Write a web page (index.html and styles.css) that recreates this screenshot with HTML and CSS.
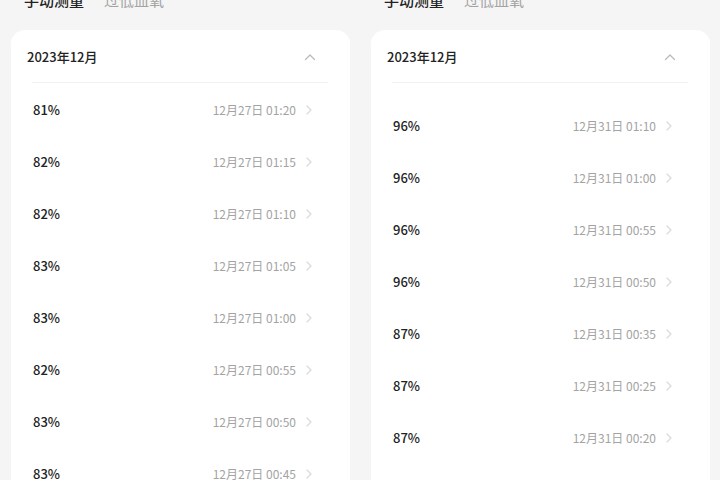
FILE: index.html
```html
<!DOCTYPE html>
<html lang="zh-CN">
  <head>
    <meta charset="UTF-8" />
    <meta name="viewport" content="width=device-width, initial-scale=1.0" />
    <title>血氧记录</title>
    <link rel="stylesheet" href="styles.css">
  </head>
  <body>
    <div class="screens">
      <div class="screen">
        <div class="tabs">
          <span class="tab active">手动测量</span>
          <span class="tab">过低血氧</span>
        </div>
        <div class="card">
          <div class="card-header">
            <span class="month">2023年12月</span>
            <svg class="fold" width="12" height="8" viewBox="0 0 12 8">
              <polyline points="1.5,6.5 6,2 10.5,6.5" />
            </svg>
          </div>
          <div class="list">
            <div class="row"><span class="value">81%</span><span class="time">12月27日 01:20</span><svg class="arrow" width="6" height="10" viewBox="0 0 6 10"><polyline points="1,1 5,5 1,9" /></svg></div>
            <div class="row"><span class="value">82%</span><span class="time">12月27日 01:15</span><svg class="arrow" width="6" height="10" viewBox="0 0 6 10"><polyline points="1,1 5,5 1,9" /></svg></div>
            <div class="row"><span class="value">82%</span><span class="time">12月27日 01:10</span><svg class="arrow" width="6" height="10" viewBox="0 0 6 10"><polyline points="1,1 5,5 1,9" /></svg></div>
            <div class="row"><span class="value">83%</span><span class="time">12月27日 01:05</span><svg class="arrow" width="6" height="10" viewBox="0 0 6 10"><polyline points="1,1 5,5 1,9" /></svg></div>
            <div class="row"><span class="value">83%</span><span class="time">12月27日 01:00</span><svg class="arrow" width="6" height="10" viewBox="0 0 6 10"><polyline points="1,1 5,5 1,9" /></svg></div>
            <div class="row"><span class="value">82%</span><span class="time">12月27日 00:55</span><svg class="arrow" width="6" height="10" viewBox="0 0 6 10"><polyline points="1,1 5,5 1,9" /></svg></div>
            <div class="row"><span class="value">83%</span><span class="time">12月27日 00:50</span><svg class="arrow" width="6" height="10" viewBox="0 0 6 10"><polyline points="1,1 5,5 1,9" /></svg></div>
            <div class="row"><span class="value">83%</span><span class="time">12月27日 00:45</span><svg class="arrow" width="6" height="10" viewBox="0 0 6 10"><polyline points="1,1 5,5 1,9" /></svg></div>
          </div>
        </div>
      </div>

      <div class="screen">
        <div class="tabs">
          <span class="tab active">手动测量</span>
          <span class="tab">过低血氧</span>
        </div>
        <div class="card">
          <div class="card-header">
            <span class="month">2023年12月</span>
            <svg class="fold" width="12" height="8" viewBox="0 0 12 8">
              <polyline points="1.5,6.5 6,2 10.5,6.5" />
            </svg>
          </div>
          <div class="list list-spaced">
            <div class="row"><span class="value">96%</span><span class="time">12月31日 01:10</span><svg class="arrow" width="6" height="10" viewBox="0 0 6 10"><polyline points="1,1 5,5 1,9" /></svg></div>
            <div class="row"><span class="value">96%</span><span class="time">12月31日 01:00</span><svg class="arrow" width="6" height="10" viewBox="0 0 6 10"><polyline points="1,1 5,5 1,9" /></svg></div>
            <div class="row"><span class="value">96%</span><span class="time">12月31日 00:55</span><svg class="arrow" width="6" height="10" viewBox="0 0 6 10"><polyline points="1,1 5,5 1,9" /></svg></div>
            <div class="row"><span class="value">96%</span><span class="time">12月31日 00:50</span><svg class="arrow" width="6" height="10" viewBox="0 0 6 10"><polyline points="1,1 5,5 1,9" /></svg></div>
            <div class="row"><span class="value">87%</span><span class="time">12月31日 00:35</span><svg class="arrow" width="6" height="10" viewBox="0 0 6 10"><polyline points="1,1 5,5 1,9" /></svg></div>
            <div class="row"><span class="value">87%</span><span class="time">12月31日 00:25</span><svg class="arrow" width="6" height="10" viewBox="0 0 6 10"><polyline points="1,1 5,5 1,9" /></svg></div>
            <div class="row"><span class="value">87%</span><span class="time">12月31日 00:20</span><svg class="arrow" width="6" height="10" viewBox="0 0 6 10"><polyline points="1,1 5,5 1,9" /></svg></div>
            <div class="row"><span class="value">87%</span><span class="time">12月31日 00:15</span><svg class="arrow" width="6" height="10" viewBox="0 0 6 10"><polyline points="1,1 5,5 1,9" /></svg></div>
          </div>
        </div>
      </div>
    </div>
  </body>
</html>
```

FILE: styles.css
```css
html,
body {
  height: 100%;
  overflow: hidden;
}
body {
  font-family: "Noto Sans CJK SC", "Noto Sans", sans-serif;
  background-color: #f5f5f5;
  color: #222222;
  margin: 0;
  padding: 0;
}
.screens {
  display: grid;
  grid-template-columns: 360px 360px;
}
.screen {
  display: flex;
  flex-direction: column;
}
.tabs {
  display: flex;
  gap: 20px;
  margin-top: -10px;
  padding-left: 24px;
  height: 20px;
  line-height: 20px;
  font-size: 15px;
}
.tab {
  color: #a3a3a3;
}
.tab.active {
  color: #222222;
  font-weight: 500;
}
.card {
  margin: 20px 10px 0 11px;
  background-color: #ffffff;
  border-radius: 14px;
}
.card-header {
  display: flex;
  justify-content: space-between;
  align-items: center;
  height: 18px;
  padding: 18px 34px 16px 16px;
}
.month {
  font-size: 13px;
  font-weight: 500;
  line-height: 18px;
}
.fold polyline,
.arrow polyline {
  fill: none;
  stroke-width: 1.2;
  stroke-linecap: round;
  stroke-linejoin: round;
}
.fold polyline {
  stroke: #b8b8b8;
}
.list {
  margin: 0 22px 0 21px;
  border-top: 1px solid #f2f2f2;
}
.list-spaced {
  padding-top: 16px;
}
.row {
  display: flex;
  align-items: center;
  height: 52px;
  padding-left: 1px;
  padding-right: 16px;
}
.value {
  flex: 1;
  font-size: 13px;
  font-weight: 500;
}
.time {
  font-size: 12px;
  color: #a3a3a3;
  margin-right: 10px;
}
.arrow {
  margin-top: 2px;
}
.arrow polyline {
  stroke: #dadada;
}
```
